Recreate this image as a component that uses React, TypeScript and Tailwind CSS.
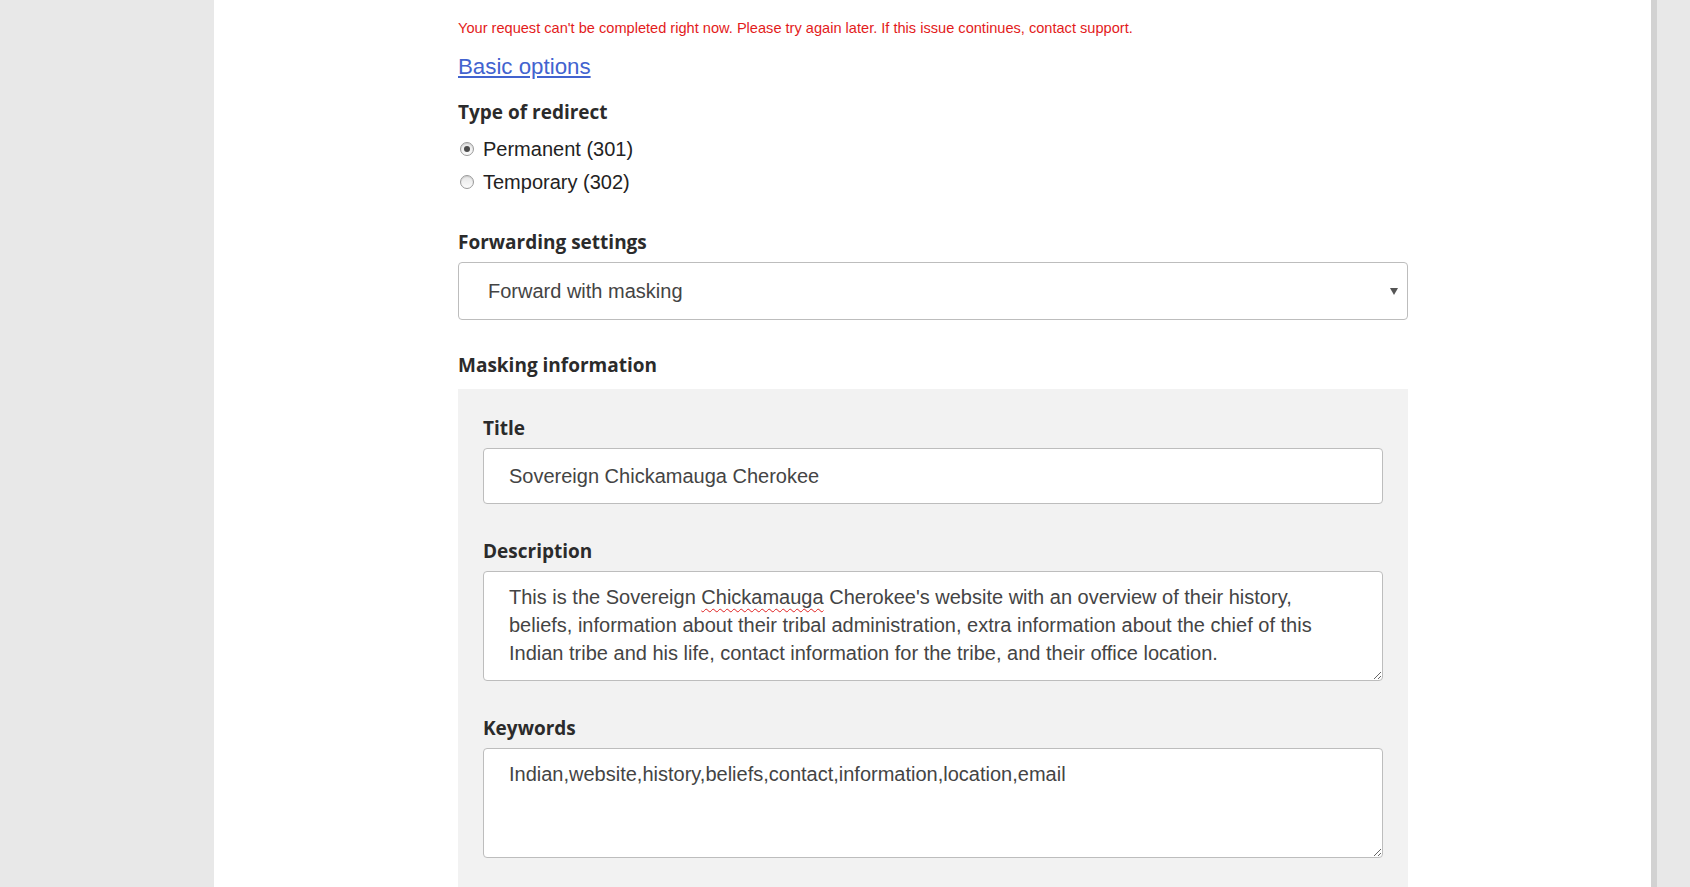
const body = { fontFamily: '"Liberation Sans", Arial, sans-serif' };
const head = { fontFamily: '"Open Sans", Lato, sans-serif' };

function Radio({ label, checked }: { label: string; checked?: boolean }) {
  return (
    <div className="flex h-[33px] items-center">
      <span className="ml-[2px] flex h-[14px] w-[14px] items-center justify-center rounded-full border border-[#9a9a9a] bg-gradient-to-b from-[#e6e6e6] to-[#fbfbfb] shadow-[inset_0_1px_1px_rgba(0,0,0,0.12)]">
        {checked && <span className="h-[6px] w-[6px] rounded-full bg-[#4b4b4b]" />}
      </span>
      <span className="ml-[9px] text-[20px] leading-[24px] text-[#222]" style={body}>
        {label}
      </span>
    </div>
  );
}

function Label({ children, className = "" }: { children: React.ReactNode; className?: string }) {
  return (
    <h3 className={`text-[19px] font-bold leading-[24px] text-[#2b2b2b] ${className}`} style={head}>
      {children}
    </h3>
  );
}

export default function App() {
  return (
    <div className="flex h-[887px] w-full overflow-hidden bg-[#e8e8e8]">
      <div className="w-[214px] shrink-0" />
      <div className="w-[1437px] shrink-0 bg-white pl-[244px]">
        <div className="w-[950px]">
          <p className="mt-[20px] text-[14.6px] leading-[16px] text-[#e31b1b]" style={body}>
            Your request can't be completed right now. Please try again later. If this issue continues, contact support.
          </p>
          <a href="#" className="mt-[18px] block w-fit text-[22.3px] leading-[26px] text-[#4263cf] underline" style={body}>
            Basic options
          </a>
          <Label className="mt-[20px]">Type of redirect</Label>
          <div className="mt-[8px]">
            <Radio label="Permanent (301)" checked />
            <Radio label="Temporary (302)" />
          </div>

          <Label className="mt-[32px]">Forwarding settings</Label>
          <div className="mt-[8px] flex h-[58px] items-center justify-between rounded-[4px] border border-[#bdbdbd] pl-[29px] pr-[9px]">
            <span className="text-[20px] text-[#444]" style={body}>Forward with masking</span>
            <svg width="8" height="7" viewBox="0 0 8 7">
              <polygon points="0,0 8,0 4,7" fill="#555" />
            </svg>
          </div>

          <Label className="mt-[33px]">Masking information</Label>
          <div className="mt-[12px] bg-[#f2f2f2] px-[25px] pb-[40px] pt-[27px]">
            <Label>Title</Label>
            <div className="mt-[8px] flex h-[56px] items-center rounded-[4px] border border-[#bdbdbd] bg-white px-[25px]">
              <span className="text-[20px] text-[#444]" style={body}>Sovereign Chickamauga Cherokee</span>
            </div>

            <Label className="mt-[35px]">Description</Label>
            <div
              className="mt-[8px] h-[110px] resize overflow-auto rounded-[4px] border border-[#bdbdbd] bg-white px-[25px] pt-[11px] text-[20px] leading-[28px] text-[#444]"
              style={body}
            >
              This is the Sovereign{" "}
              <span className="underline decoration-[#e02020] decoration-wavy decoration-1 underline-offset-[4px]">Chickamauga</span>{" "}
              Cherokee's website with an overview of their history, beliefs, information about their tribal administration, extra information about the chief of this Indian tribe and his life, contact information for the tribe, and their office location.
            </div>

            <Label className="mt-[35px]">Keywords</Label>
            <div
              className="mt-[8px] h-[110px] resize overflow-auto rounded-[4px] border border-[#bdbdbd] bg-white px-[25px] pt-[11px] text-[20px] leading-[28px] text-[#444]"
              style={body}
            >
              Indian,website,history,beliefs,contact,information,location,email
            </div>
          </div>
        </div>
      </div>
      <div className="w-[6px] shrink-0 bg-[#d2d2d2]" />
    </div>
  );
}
